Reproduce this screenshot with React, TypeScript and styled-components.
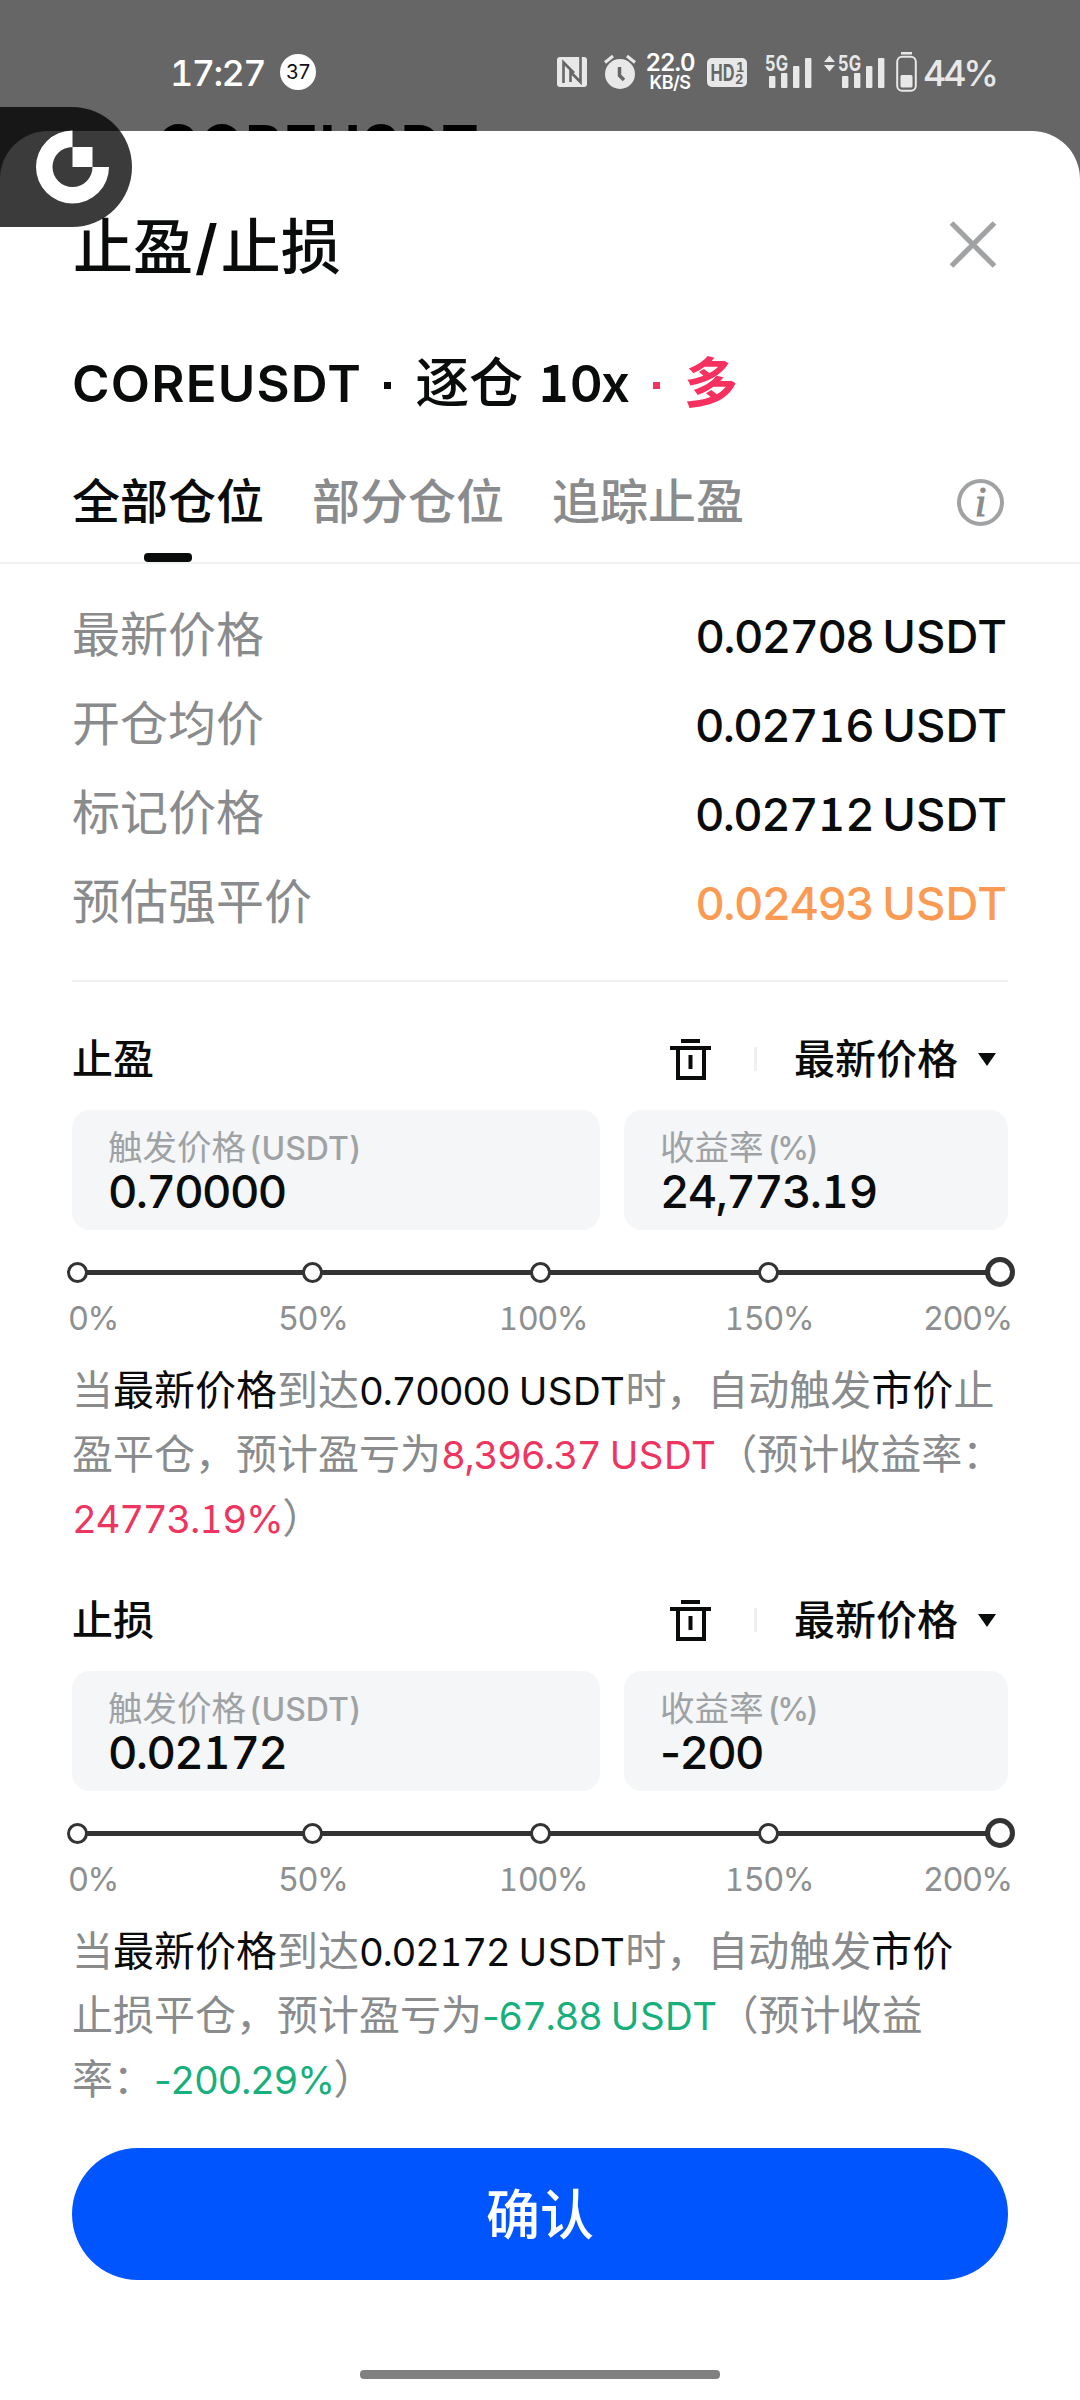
import React from "react";
import styled, { createGlobalStyle } from "styled-components";

const GlobalStyle = createGlobalStyle`
  * { box-sizing: border-box; }
  html, body { margin: 0; padding: 0; background: #fff; }
  body {
    width: 1080px;
    height: 2400px;
    overflow: hidden;
    font-family: Inter, "Noto Sans CJK SC", sans-serif;
    font-feature-settings: "tnum";
    color: #0a0b0b;
  }
`;

const Screen = styled.main`
  position: relative;
  width: 1080px;
  height: 2400px;
  background: #666;
  overflow: hidden;
`;

const StatusBar = styled.div`
  display: flex;
  align-items: center;
  height: 100px;
  padding: 44px 85px 0 170px;
  color: #fff;
`;

const Clock = styled.span`
  width: 110px;
  padding-top: 1px;
  font-size: 36px;
  font-weight: 500;
  line-height: 56px;
  letter-spacing: -1.6px;
  white-space: nowrap;
`;

const CountBadge = styled.span`
  width: 36px;
  height: 36px;
  border-radius: 50%;
  background: #fff;
  color: #111;
  font-size: 20px;
  line-height: 36px;
  text-align: center;
  letter-spacing: -1px;
`;

const StatusIcons = styled.div`
  display: flex;
  align-items: center;
  margin-left: auto;
  color: #e8e8e8;
`;

const Glyph = styled.svg<{ $ml?: number }>`
  display: block;
  flex: none;
  margin-left: ${(p) => p.$ml ?? 0}px;
  overflow: visible;
`;

const Speed = styled.div`
  display: flex;
  flex-direction: column;
  align-items: center;
  width: 50px;
  margin-left: 9px;
  color: #fff;
  font-weight: 600;
  font-size: 24px;
  line-height: 20px;
  letter-spacing: -1px;
  small {
    font-size: 18px;
    line-height: 19px;
    letter-spacing: -0.5px;
  }
`;

const BatteryText = styled.span`
  width: 72px;
  margin-left: 6px;
  padding-top: 2px;
  font-size: 36px;
  line-height: 56px;
  letter-spacing: -3.2px;
  font-weight: 500;
  white-space: nowrap;
`;

const BackTitle = styled.div`
  height: 60px;
  margin-top: 16px;
  padding-left: 157px;
  font-size: 56px;
  line-height: 60px;
  font-weight: 700;
  letter-spacing: 1.8px;
  color: #000;
`;

const Sheet = styled.section`
  position: absolute;
  inset: 131px 0 0 0;
  display: flex;
  flex-direction: column;
  padding-top: 75px;
  border-radius: 48px 48px 0 0;
  background: #fff;
`;

const Header = styled.header`
  display: flex;
  align-items: center;
  justify-content: space-between;
  height: 80px;
  padding: 0 84px 0 73px;
`;

const Title = styled.h1`
  margin: 0;
  padding-top: 2px;
  font-size: 60px;
  font-weight: 500;
  line-height: 80px;
`;

const Slash = styled.span`
  margin: 0 3px 0 2px;
  font-weight: 600;
`;

const CloseButton = styled.span`
  padding-bottom: 4px;
`;

const Pair = styled.h2`
  display: flex;
  align-items: center;
  height: 80px;
  margin: 58px 0 0;
  padding-left: 72px;
  font-size: 54px;
  font-weight: 500;
  line-height: 80px;
  white-space: pre;
`;

const Latin = styled.span<{ $size: number; $weight?: number; $track?: number; $ml?: number }>`
  margin-left: ${(p) => p.$ml ?? 0}px;
  font-size: ${(p) => p.$size}px;
  font-weight: ${(p) => p.$weight ?? "inherit"};
  letter-spacing: ${(p) => p.$track ?? 0}px;
`;

const Dot = styled.i<{ $color?: string; $mx: string }>`
  width: 7px;
  height: 7px;
  margin: ${(p) => p.$mx};
  background: ${(p) => p.$color ?? "#0a0b0b"};
`;

const Long = styled.span`
  color: #f6315f;
  font-weight: 700;
`;

const Tabs = styled.nav`
  display: flex;
  gap: 48px;
  height: 124px;
  margin-top: 16px;
  padding: 0 76px 0 72px;
  border-bottom: 2px solid #f1f2f3;
`;

const Tab = styled.div<{ $active?: boolean }>`
  display: flex;
  flex-direction: column;
  justify-content: flex-end;
  align-items: center;
  width: 192px;
  font-size: 48px;
  font-weight: 500;
  line-height: 102px;
  white-space: nowrap;
  color: ${(p) => (p.$active ? "#0a0b0b" : "#898b8d")};
  &::after {
    content: "";
    width: 48px;
    height: 9px;
    border-radius: 4px;
    background: ${(p) => (p.$active ? "#0a0b0b" : "transparent")};
  }
`;

const Info = styled.span`
  align-self: center;
  display: flex;
  align-items: center;
  justify-content: center;
  width: 47px;
  height: 47px;
  margin: 2px 0 0 auto;
  border: 4px solid #a0a2a3;
  border-radius: 50%;
  color: #898b8d;
  font: italic 400 42px/36px "Liberation Serif", serif;
  -webkit-text-stroke: 1px #898b8d;
`;

const Prices = styled.dl`
  margin: 26px 72px 0;
  padding-bottom: 34px;
  border-bottom: 2px solid #eff0f1;
`;

const PriceRow = styled.div`
  display: flex;
  align-items: center;
  justify-content: space-between;
  height: 89px;
`;

const PriceName = styled.dt`
  font-size: 48px;
  line-height: 89px;
  color: #898b8d;
`;

const PriceValue = styled.dd<{ $warn?: boolean }>`
  margin: 0;
  padding: 4px 1px 0 0;
  font-size: 45.5px;
  font-weight: 500;
  line-height: 85px;
  color: ${(p) => (p.$warn ? "#fb9a52" : "#0a0b0b")};
`;

const Digits = styled.span`
  letter-spacing: -0.036em;
`;

/* numeral one with a foot serif */
const One = styled.span`
  margin: 0 0.02em 0 0.035em;
  font-family: "Noto Sans CJK SC", sans-serif;
  letter-spacing: 0;
  line-height: 0;
`;

const Minus = styled.span`
  font-feature-settings: "tnum" 0;
`;

const Unit = styled.span`
  margin-left: 0.2em;
  letter-spacing: 0.003em;
`;

const Block = styled.section<{ $mt: number }>`
  margin: ${(p) => p.$mt}px 72px 0;
`;

const BlockHead = styled.div`
  display: flex;
  align-items: center;
  height: 78px;
  font-size: 41px;
  font-weight: 500;
  line-height: 80px;
`;

const BlockTitle = styled.h3`
  flex: 1;
  margin: 0;
  font: inherit;
`;

const Separator = styled.i`
  width: 3px;
  height: 24px;
  margin: 0 37px 0 43px;
  background: #eff0f1;
`;

const Caret = styled.i`
  margin: 0 12px 0 20px;
  border: 9px solid transparent;
  border-top: 13px solid #0a0b0b;
  border-bottom: 0;
`;

const Fields = styled.div`
  display: grid;
  grid-template-columns: 528px 384px;
  gap: 24px;
  margin-top: 12px;
`;

const Field = styled.label`
  display: flex;
  flex-direction: column;
  height: 120px;
  padding: 19px 36px 0;
  border-radius: 18px;
  background: #f4f6f8;
`;

const FieldName = styled.span`
  font-size: 34.5px;
  font-weight: 400;
  line-height: 38px;
  color: #9fa2a5;
`;

const FieldValue = styled.span`
  font-size: 45.5px;
  font-weight: 500;
  line-height: 47px;
`;

const Slider = styled.div`
  display: flex;
  align-items: center;
  height: 30px;
  margin: 27px -7px 0 -5px;
`;

const Stop = styled.i<{ $big?: boolean }>`
  flex: none;
  width: ${(p) => (p.$big ? 30 : 21)}px;
  height: ${(p) => (p.$big ? 30 : 21)}px;
  border: ${(p) => (p.$big ? 5 : 3)}px solid #333;
  border-radius: 50%;
  background: #fff;
`;

const Rail = styled.i<{ $grow: number }>`
  flex: ${(p) => p.$grow} 1 0;
  height: 5px;
  margin: 0 -1px;
  background: #333;
`;

const Scale = styled.div`
  display: grid;
  grid-template-columns: 210px 220px 226px 199px auto;
  height: 40px;
  margin: 12px -10px 0 -4px;
  font-size: 32.5px;
  line-height: 40px;
  color: #8d8f90;
  ${Digits} {
    letter-spacing: -0.05em;
  }
`;

const Note = styled.p`
  margin: 19px -10px 0 0;
  font-size: 41px;
  line-height: 64px;
  color: #898b8d;
  white-space: nowrap;
`;

const Strong = styled.span`
  color: #0a0b0b;
`;

const Amount = styled.span<{ $color?: string }>`
  font-size: 38.5px;
  line-height: 1;
  color: ${(p) => p.$color ?? "#0a0b0b"};
  ${Unit} {
    margin-left: 0.24em;
    letter-spacing: 0.012em;
  }
`;

const Confirm = styled.button`
  height: 132px;
  margin: 37px 72px 0;
  padding: 4px 0 0;
  border: 0;
  border-radius: 66px;
  background: #0055ff;
  color: #fff;
  font: 500 54px/128px Inter, "Noto Sans CJK SC", sans-serif;
`;

const HomeBar = styled.div`
  width: 360px;
  height: 9px;
  margin: 90px auto 0;
  border-radius: 4px;
  background: #808080;
`;

const FloatingBubble = styled.div`
  position: absolute;
  top: 107px;
  left: 0;
  display: flex;
  align-items: center;
  width: 132px;
  height: 120px;
  padding-left: 36px;
  border-radius: 0 60px 60px 0;
  background: rgba(0, 0, 0, 0.77);
`;

const Numeric = ({ value }: { value: string }) => {
  const [number, unit] = value.split(" ");
  return (
    <>
      <Digits>
        {number.split(/([1-])/).map((part, i) =>
          part === "1" ? <One key={i}>1</One> : part === "-" ? <Minus key={i}>-</Minus> : part,
        )}
      </Digits>
      {unit && <Unit>{unit}</Unit>}
    </>
  );
};

const Signal = ({ ml, arrows }: { ml: number; arrows?: boolean }) => {
  const o = arrows ? 14 : 0;
  return (
    <Glyph $ml={ml} width={47 + o} height={36} viewBox={`0 0 ${47 + o} 36`} fill="#e8e8e8">
      {arrows && <path d="M0 8l5.5-6.5L11 8zM0 11l5.5 6.5L11 11z" />}
      <text x={o} y={17} fontSize={21} fontWeight={700} textLength={23} lengthAdjust="spacingAndGlyphs" fontFamily="Inter">
        5G
      </text>
      <rect x={4 + o} y={22} width={6.4} height={12} rx={1} />
      <rect x={16 + o} y={19} width={6.4} height={15} rx={1} />
      <rect x={28 + o} y={12} width={6.4} height={22} rx={1} />
      <rect x={40 + o} y={4} width={6.4} height={30} rx={1} />
    </Glyph>
  );
};

const Trash = () => (
  <Glyph width={41} height={41} viewBox="0 0 41 41" fill="none" stroke="#0a0b0b" strokeWidth={4}>
    <path d="M11 2h19M0 9h41M8 9v30h26V9M20.5 16v14" />
  </Glyph>
);

const prices = [
  { name: "最新价格", value: "0.02708 USDT" },
  { name: "开仓均价", value: "0.02716 USDT" },
  { name: "标记价格", value: "0.02712 USDT" },
  { name: "预估强平价", value: "0.02493 USDT", warn: true },
];

const stops = ["0%", "50%", "100%", "150%", "200%"];
const railWeights = [213.5, 207, 207, 206.5];

interface TriggerProps {
  title: string;
  price: string;
  rate: string;
  mt: number;
  children: React.ReactNode;
}

const Trigger = ({ title, price, rate, mt, children }: TriggerProps) => (
  <Block $mt={mt}>
    <BlockHead>
      <BlockTitle>{title}</BlockTitle>
      <Trash />
      <Separator />
      最新价格
      <Caret />
    </BlockHead>
    <Fields>
      <Field>
        <FieldName>
          触发价格<Latin $size={32} $weight={500} $ml={3}>(USDT)</Latin>
        </FieldName>
        <FieldValue><Numeric value={price} /></FieldValue>
      </Field>
      <Field>
        <FieldName>
          收益率<Latin $size={32} $weight={500} $ml={4} $track={-2.8}>(%)</Latin>
        </FieldName>
        <FieldValue><Numeric value={rate} /></FieldValue>
      </Field>
    </Fields>
    <Slider>
      {stops.map((s, i) => (
        <React.Fragment key={s}>
          <Stop $big={i === stops.length - 1} />
          {i < railWeights.length && <Rail $grow={railWeights[i]} />}
        </React.Fragment>
      ))}
    </Slider>
    <Scale>
      {stops.map((s) => (
        <span key={s}><Numeric value={s} /></span>
      ))}
    </Scale>
    <Note>{children}</Note>
  </Block>
);

export default function App() {
  return (
    <Screen>
      <GlobalStyle />
      <StatusBar>
        <Clock>17:27</Clock>
        <CountBadge>37</CountBadge>
        <StatusIcons>
          <Glyph width={30} height={30} viewBox="0 0 30 30">
            <rect width={30} height={30} rx={3} fill="#e8e8e8" />
            <path d="M6.5 26V5.5L17 16M23.5 0v25L13.500 15v10" fill="none" stroke="#666" strokeWidth={2.600} />
          </Glyph>
          <Glyph $ml={17} width={32} height={36} viewBox="0 0 32 36">
            <circle cx={16} cy={20} r={15} fill="#e8e8e8" />
            <path d="M1 8.500L9 2M31 8.500L23 2" stroke="#e8e8e8" strokeWidth={3} />
            <path d="M15.500 13v8.500L20 26" fill="none" stroke="#666" strokeWidth={3.500} />
          </Glyph>
          <Speed>
            22.0<small>KB/S</small>
          </Speed>
          <Glyph $ml={12} width={40} height={29} viewBox="0 0 40 29">
            <rect width={40} height={29} rx={5} fill="#e8e8e8" />
            <g fill="#666" fontFamily="Inter" fontWeight={700}>
              <text x={3.500} y={22.500} fontSize={23} textLength={24} lengthAdjust="spacingAndGlyphs">HD</text>
              <text x={29} y={14} fontSize={13}>1</text>
              <text x={28} y={26} fontSize={13}>2</text>
            </g>
          </Glyph>
          <Signal ml={18} />
          <Signal ml={12} arrows />
          <Glyph $ml={11} width={21} height={40} viewBox="0 0 21 40">
            <rect x={5} y={0} width={11} height={2.500} fill="#e8e8e8" />
            <rect x={1.200} y={4.700} width={18.600} height={34} rx={5} fill="none" stroke="#e8e8e8" strokeWidth={2} />
            <rect x={4.500} y={23} width={12} height={12.500} rx={1.500} fill="#e8e8e8" />
          </Glyph>
          <BatteryText>44%</BatteryText>
        </StatusIcons>
      </StatusBar>
      <BackTitle>COREUSDT</BackTitle>

      <Sheet>
        <Header>
          <Title>止盈<Slash>/</Slash>止损</Title>
          <CloseButton>
            <Glyph width={46} height={47} viewBox="0 0 46 47" stroke="#a0a2a3" strokeWidth={5.200}>
              <path d="M1.500 2L44.500 45M44.500 2L1.500 45" />
            </Glyph>
          </CloseButton>
        </Header>
        <Pair>
          <Latin $size={51} $weight={600} $track={1.2}>COREUSDT</Latin>
          <Dot $mx="3px 24px 0 22px" />
          逐仓
          <Latin $size={51} $weight={600}> <Numeric value="10x" /></Latin>
          <Dot $color="#f6315f" $mx="3px 24px 0 25px" />
          <Long>多</Long>
        </Pair>
        <Tabs>
          <Tab $active>全部仓位</Tab>
          <Tab>部分仓位</Tab>
          <Tab>追踪止盈</Tab>
          <Info>i</Info>
        </Tabs>
        <Prices>
          {prices.map((p) => (
            <PriceRow key={p.name}>
              <PriceName>{p.name}</PriceName>
              <PriceValue $warn={p.warn}><Numeric value={p.value} /></PriceValue>
            </PriceRow>
          ))}
        </Prices>
        <Trigger title="止盈" price="0.70000" rate="24,773.19" mt={38}>
          当<Strong>最新价格</Strong>到达<Amount><Numeric value="0.70000 USDT" /></Amount>时，自动触发<Strong>市价</Strong>止
          <br />
          盈平仓，预计盈亏为<Amount $color="#ee3560"><Numeric value="8,396.37 USDT" /></Amount>（预计收益率：
          <br />
          <Amount $color="#ee3560"><Numeric value="24773.19%" /></Amount>）
        </Trigger>
        <Trigger title="止损" price="0.02172" rate="-200" mt={31}>
          当<Strong>最新价格</Strong>到达<Amount><Numeric value="0.02172 USDT" /></Amount>时，自动触发<Strong>市价</Strong>
          <br />
          止损平仓，预计盈亏为<Amount $color="#17b07c"><Numeric value="-67.88 USDT" /></Amount>（预计收益
          <br />
          率：<Amount $color="#17b07c"><Numeric value="-200.29%" /></Amount>）
        </Trigger>
        <Confirm>确认</Confirm>
        <HomeBar />
      </Sheet>

      <FloatingBubble>
        <Glyph width={74} height={74} viewBox="0 0 74 74" fill="#fff">
          <path d="M36.500 0.500A36.500 36.500 0 1 0 73 37H56.500A20 20 0 1 1 36.500 17z" />
          <rect x={36.500} y={17} width={20} height={20} />
        </Glyph>
      </FloatingBubble>
    </Screen>
  );
}
